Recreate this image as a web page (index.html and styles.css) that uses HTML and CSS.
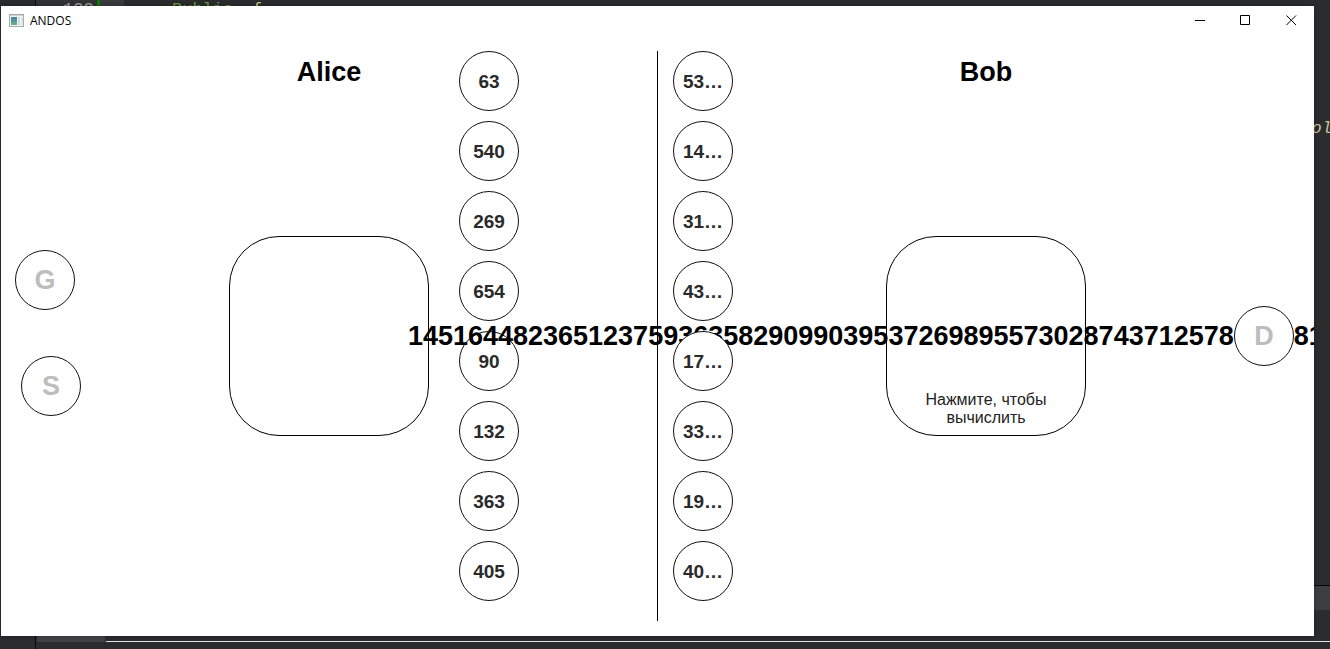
FILE: index.html
```html
<!DOCTYPE html>
<html lang="ru">
<head>
<meta charset="utf-8">
<title>ANDOS</title>
<link rel="stylesheet" href="styles.css">
</head>
<body>
<div class="editor" aria-hidden="true">
  <div class="gutter"></div>
  <div class="code-line"><span class="line-number">123</span><span class="change-mark"></span><span class="keyword">Public</span><span class="brace">{</span></div>
  <span class="code-tail">ol</span>
  <div class="side-panel"></div>
  <div class="bottom-tab"></div>
  <div class="bottom-line"></div>
</div>
<main class="window">
  <header class="titlebar">
    <svg class="app-icon" viewBox="0 0 16 14" aria-hidden="true">
      <defs><linearGradient id="pane" x1="0" y1="0" x2="0" y2="1"><stop offset="0" stop-color="#4a7fa8"/><stop offset="1" stop-color="#63b583"/></linearGradient></defs>
      <rect x="0.5" y="0.5" width="14" height="12" fill="#f4f6f7" stroke="#a3a9ae"/>
      <rect x="1" y="1" width="13" height="1" fill="#cdd3d7"/>
      <rect x="2" y="3" width="6" height="8" fill="url(#pane)"/>
      <rect x="9" y="3" width="2" height="8" fill="#c9dde0"/>
      <rect x="12" y="3" width="2" height="8" fill="#dfe5e8"/>
    </svg>
    <h1 class="app-name">ANDOS</h1>
    <div class="controls">
      <button class="control" aria-label="Minimize"><svg viewBox="0 0 11 11"><path d="M1 5.500H11"/></svg></button>
      <button class="control" aria-label="Maximize"><svg viewBox="0 0 11 11"><path d="M.5 .5H9.500V9.500H.5Z"/></svg></button>
      <button class="control" aria-label="Close"><svg viewBox="0 0 11 11"><path d="M.5 .5L10 10M10 .5L.5 10"/></svg></button>
    </div>
  </header>
  <div class="stage">
    <section class="side alice">
      <div class="tokens">
        <button class="ball letter">G</button>
        <button class="ball letter shifted">S</button>
      </div>
      <div class="middle">
        <h2 class="name">Alice</h2>
        <div class="box"></div>
      </div>
      <div class="list">
        <button class="ball">63</button>
        <button class="ball">540</button>
        <button class="ball">269</button>
        <button class="ball">654</button>
        <button class="ball">90</button>
        <button class="ball">132</button>
        <button class="ball">363</button>
        <button class="ball">405</button>
      </div>
    </section>
    <div class="divider"></div>
    <section class="side bob">
      <div class="list">
        <button class="ball">53…</button>
        <button class="ball">14…</button>
        <button class="ball">31…</button>
        <button class="ball">43…</button>
        <button class="ball">17…</button>
        <button class="ball">33…</button>
        <button class="ball">19…</button>
        <button class="ball">40…</button>
      </div>
      <div class="middle">
        <h2 class="name">Bob</h2>
        <div class="box">
          <span class="value">14516448236512375936358290990395372698955730287437125780000810000000000000000</span>
          <button class="hint">Нажмите, чтобы вычислить</button>
        </div>
      </div>
      <div class="secret">
        <button class="ball letter">D</button>
      </div>
    </section>
  </div>
</main>
</body>
</html>
```

FILE: styles.css
```css
* { box-sizing: border-box; }

body {
  margin: 0;
  height: 100vh;
  padding: 6px 16px 13px 1px;
  position: relative;
  overflow: hidden;
  background: #2b2c2e;
  font-family: "Liberation Sans", Arial, sans-serif;
  color: #000;
}

button {
  font: inherit;
  padding: 0;
  cursor: pointer;
}

/* Code editor behind the window */
.editor {
  position: absolute;
  inset: 0;
  overflow: hidden;
  font: 17px/20px "Liberation Mono", monospace;
}

.gutter {
  position: absolute;
  inset: 0 auto 0 0;
  width: 36px;
  border-right: 1px solid #0c0c0c;
}

.code-line {
  position: absolute;
  top: 0;
  left: 36px;
  display: flex;
}

.line-number {
  width: 61px;
  padding-left: 27px;
  background: #313335;
  color: #a4a3a3;
}

.change-mark {
  width: 27px;
  border-left: 3px solid #0d7a0d;
  background: #3a3b3d;
}

.keyword {
  width: 80px;
  margin-left: 48px;
  color: #6f9a3e;
}

.brace { color: #d5c98a; }

.code-tail {
  position: absolute;
  top: 119px;
  right: -2px;
  font-style: italic;
  color: #c9c59a;
}

.side-panel {
  position: absolute;
  right: 0;
  bottom: 39px;
  width: 16px;
  height: 25px;
  border-top: 1px solid #050505;
  background: #3c3e40;
}

.bottom-tab {
  position: absolute;
  left: 37px;
  bottom: 7px;
  width: 68px;
  height: 6px;
  background: #434446;
}

.bottom-line {
  position: absolute;
  left: 106px;
  right: 0;
  bottom: 7px;
  height: 1px;
  background: #e4e4e4;
}

/* Window */
.window {
  position: relative;
  height: 100%;
  display: flex;
  flex-direction: column;
  overflow: hidden;
  background: #fff;
  box-shadow: 0 0 6px rgba(0, 0, 0, 0.3);
}

.titlebar {
  height: 30px;
  flex: none;
  display: flex;
  align-items: center;
  gap: 5px;
  padding-left: 8px;
}

.app-icon {
  width: 16px;
  height: 14px;
}

.app-name {
  margin: 0;
  font: 12px/16px "Open Sans", "Noto Sans", sans-serif;
}

.controls {
  display: flex;
  align-self: stretch;
  margin-left: auto;
}

.control {
  width: 46px;
  display: grid;
  place-items: center;
  padding-bottom: 2px;
  border: 0;
  background: none;
}

.control svg {
  width: 11px;
  height: 11px;
  fill: none;
  stroke: #000;
}

.stage {
  flex: 1;
  display: grid;
  grid-template-columns: 1fr 1px 1fr;
}

.divider {
  margin: 15px 0;
  background: #000;
}

.side {
  display: grid;
  grid-template-columns: 1fr 200px 1fr;
}

.middle {
  display: grid;
  grid-template-rows: 1fr 200px 1fr;
  justify-items: center;
}

.name {
  margin: 20px 0 0;
  font-size: 27px;
  line-height: 32px;
}

.box {
  position: relative;
  width: 200px;
  display: flex;
  align-items: flex-end;
  justify-content: center;
  padding-bottom: 8px;
  border: 1px solid #000;
  border-radius: 50px;
}

.value {
  position: absolute;
  top: 50%;
  left: 50%;
  transform: translate(-50%, -50%);
  font-size: 27px;
  line-height: 32px;
  font-weight: bold;
  white-space: nowrap;
  pointer-events: none;
}

.hint {
  width: 140px;
  border: 0;
  background: none;
  color: #222;
  font-size: 16px;
  line-height: 18px;
}

.ball {
  width: 60px;
  height: 60px;
  padding-top: 2px;
  border: 1px solid #111;
  border-radius: 50%;
  background: #fff;
  color: #2a2a2a;
  font-size: 19px;
  font-weight: bold;
}

.letter {
  padding-top: 0;
  color: #bdbdbd;
  font-size: 27px;
}

.list {
  display: flex;
  flex-direction: column;
  gap: 10px;
  padding-top: 15px;
}

.alice .list { padding-left: 30px; }

.bob .list {
  position: relative;
  z-index: 1;
  padding-left: 15px;
}

.tokens {
  display: flex;
  flex-direction: column;
  justify-content: center;
  gap: 46px;
  padding: 0 0 6px 14px;
}

.shifted { margin-left: 6px; }

.secret {
  position: relative;
  z-index: 1;
  display: flex;
  align-items: center;
  justify-content: flex-end;
  padding-right: 20px;
}
```
